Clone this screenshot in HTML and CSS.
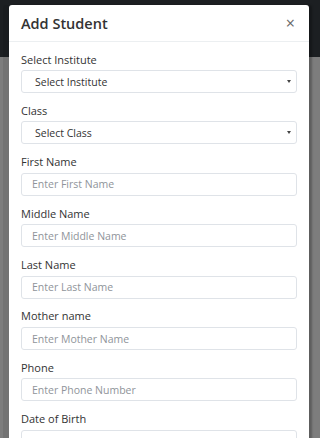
FILE: index.html
```html
<!DOCTYPE html>
<html lang="en">
<head>
  <meta charset="UTF-8" />
  <meta name="viewport" content="width=device-width, initial-scale=1.0"/>
  <title>Add Student</title>
  <link rel="stylesheet" href="styles.css">
</head>
<body>
  <div class="backdrop">
    <div class="modal">
      <div class="modal-header">
        <h2 class="modal-title">Add Student</h2>
        <button class="close" type="button">&times;</button>
      </div>

      <form class="modal-body">
        <div class="form-group">
          <label for="institute">Select Institute</label>
          <div class="select-wrap">
            <select id="institute">
              <option>Select Institute</option>
            </select>
          </div>
        </div>

        <div class="form-group">
          <label for="class">Class</label>
          <div class="select-wrap">
            <select id="class">
              <option>Select Class</option>
            </select>
          </div>
        </div>

        <div class="form-group">
          <label for="firstName">First Name</label>
          <input type="text" id="firstName" placeholder="Enter First Name" />
        </div>

        <div class="form-group">
          <label for="middleName">Middle Name</label>
          <input type="text" id="middleName" placeholder="Enter Middle Name" />
        </div>

        <div class="form-group">
          <label for="lastName">Last Name</label>
          <input type="text" id="lastName" placeholder="Enter Last Name" />
        </div>

        <div class="form-group">
          <label for="motherName">Mother name</label>
          <input type="text" id="motherName" placeholder="Enter Mother Name" />
        </div>

        <div class="form-group">
          <label for="phone">Phone</label>
          <input type="text" id="phone" placeholder="Enter Phone Number" />
        </div>

        <div class="form-group">
          <label for="dob">Date of Birth</label>
          <input type="text" id="dob" />
        </div>
      </form>
    </div>
  </div>
</body>
</html>
```

FILE: styles.css
```css
:root {
  --navbar: #1c1f22;
  --overlay: #7d7d7d;
  --text: #333333;
  --muted: #8f949a;
  --border: #dfe3e8;
}

* {
  box-sizing: border-box;
}

body {
  margin: 0;
  font-family: 'Open Sans', sans-serif;
  color: var(--text);
  background: linear-gradient(to bottom, var(--navbar) 0, var(--navbar) 57px, var(--overlay) 57px);
  min-height: 100vh;
  overflow: hidden;
}

.backdrop {
  padding: 5px 11px 0 9px;
}

.modal {
  background: #fff;
  border-radius: 3px 3px 0 0;
  box-shadow: 3px 0 2px rgba(0, 0, 0, 0.25), -6px 0 0 rgba(0, 0, 0, 0.08);
}

.modal-header {
  display: flex;
  justify-content: space-between;
  align-items: center;
  height: 37px;
  padding: 0 12px;
  border-bottom: 1px solid #eceff1;
}

.modal-title {
  margin: 0;
  font-size: 14.5px;
  font-weight: 600;
  color: #333;
}

.close {
  border: none;
  background: none;
  padding: 0 2px;
  font-family: 'Open Sans', sans-serif;
  font-size: 16px;
  line-height: 1;
  color: #666;
  cursor: pointer;
}

.modal-body {
  padding: 9.5px 12px 0;
}

.form-group {
  margin-bottom: 9.8px;
}

label {
  display: block;
  font-size: 11px;
  line-height: 15px;
  margin-bottom: 3.6px;
  color: #333;
}

input, select {
  display: block;
  width: 100%;
  height: 23px;
  border: 1px solid var(--border);
  border-radius: 3px;
  font-family: 'Open Sans', sans-serif;
  font-size: 10.5px;
  color: #333;
  background: #fff;
  padding: 0 10px;
}

input::placeholder {
  color: var(--muted);
}

.select-wrap {
  position: relative;
}

select {
  appearance: none;
  padding-left: 13px;
}

.select-wrap::after {
  content: "";
  position: absolute;
  right: 6px;
  top: 10px;
  border-left: 2.5px solid transparent;
  border-right: 2.5px solid transparent;
  border-top: 3.5px solid #444;
}
```
